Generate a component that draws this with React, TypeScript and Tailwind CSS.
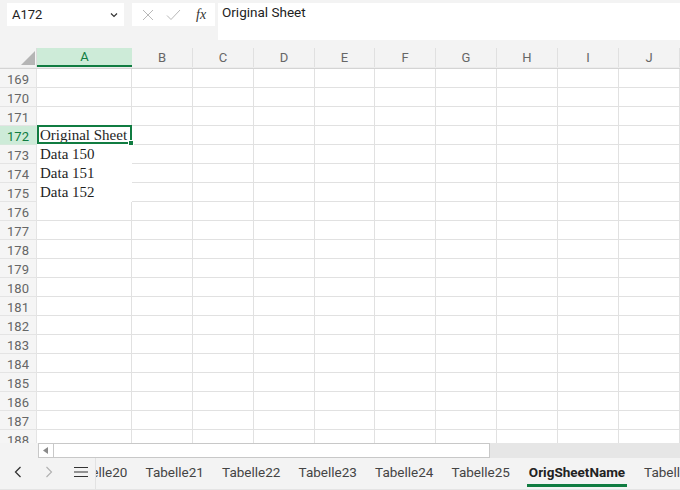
import React from 'react';

const cols = ['A', 'B', 'C', 'D', 'E', 'F', 'G', 'H', 'I', 'J'];
const colW = ['w-[95px]', 'w-[61px]', 'w-[61px]', 'w-[61px]', 'w-[60px]', 'w-[61px]', 'w-[61px]', 'w-[61px]', 'w-[61px]', 'w-[61px]'];
const rows = Array.from({ length: 20 }, (_, i) => 169 + i);
const data: Record<number, string> = {
    172: 'Original Sheet',
    173: 'Data 150',
    174: 'Data 151',
    175: 'Data 152',
};
const tabs = ['Tabelle20', 'Tabelle21', 'Tabelle22', 'Tabelle23', 'Tabelle24', 'Tabelle25', 'OrigSheetName', 'Tabelle26'];

const ui = { fontFamily: 'Roboto, "Open Sans", sans-serif' };

const Toolbar: React.FC = () => (
    <div className="h-[48px] flex items-start pt-[3px] shrink-0">
        <div className="ml-[7px] w-[117px] h-[23px] bg-white flex items-center justify-between pl-[5px] pr-[6px]">
            <span className="text-[13px] text-[#222]">A172</span>
            <svg width="8" height="6" viewBox="0 0 8 6">
                <path d="M1 1.5 L4 4.5 L7 1.5" fill="none" stroke="#333" strokeWidth="1.2" />
            </svg>
        </div>
        <div className="ml-[8px] w-[83px] h-[23px] bg-white flex items-center pl-[10px]">
            <svg width="12" height="12" viewBox="0 0 12 12">
                <path d="M1 1 L11 11 M11 1 L1 11" stroke="#b8b8b8" strokeWidth="1" />
            </svg>
            <svg className="ml-[12px]" width="15" height="12" viewBox="0 0 15 12">
                <path d="M1 6.5 L5 10.5 L14 1" fill="none" stroke="#b8b8b8" strokeWidth="1" />
            </svg>
            <span className="ml-[15px] text-[14px] italic text-[#333]" style={{ fontFamily: '"Liberation Serif", serif' }}>
                fx
            </span>
        </div>
        <div className="ml-[3px] flex-1 h-[37px] bg-white pl-[4px] leading-[18px]">
            <span className="text-[13.5px] text-[#222]">Original Sheet</span>
        </div>
    </div>
);

const HeaderRow: React.FC = () => (
    <div className="flex h-[19px] shrink-0">
        <div className="w-[37px] h-full border-r border-[#dcdcdc] flex items-end justify-end pr-[1px] pb-[2px]">
            <svg width="14" height="14" viewBox="0 0 14 14">
                <polygon points="14,0 14,14 0,14" fill="#b5b5b5" />
            </svg>
        </div>
        {cols.map((c, i) =>
            c === 'A' ? (
                <div
                    key={c}
                    className={`${colW[i]} shrink-0 h-full bg-[#cdebd8] border-b-2 border-[#107c41] flex items-center justify-center text-[13px] text-[#107c41]`}
                >
                    {c}
                </div>
            ) : (
                <div
                    key={c}
                    className={`${colW[i]} shrink-0 h-full border-r border-[#e0e0e0] flex items-center justify-center text-[13px] text-[#666]`}
                >
                    {c}
                </div>
            )
        )}
    </div>
);

const Row: React.FC<{ n: number }> = ({ n }) => {
    const active = n === 172;
    const filled = n >= 173 && n <= 175;
    return (
        <div className="flex h-[19px] shrink-0">
            <div
                className={`w-[37px] h-full border-r border-b flex items-center justify-center pt-[4px] text-[13px] ${
                    active ? 'bg-[#cdebd8] text-[#107c41] border-[#d6e8dc]' : 'bg-[#f5f5f5] text-[#666] border-[#e4e4e4]'
                }`}
            >
                {n}
            </div>
            {cols.map((c, i) => {
                if (c === 'A') {
                    return (
                        <div
                            key={c}
                            className={`${colW[i]} shrink-0 h-full bg-white relative flex items-center pl-[3px] pt-[1px] text-[15px] text-[#1f1f1f] whitespace-nowrap ${
                                filled || active ? 'border-r border-b border-white' : 'border-r border-b border-[#e1e1e1]'
                            }`}
                            style={{ fontFamily: '"Liberation Serif", serif' }}
                        >
                            {data[n]}
                            {active && (
                                <div className="absolute -top-px left-0 -right-px bottom-0 border-2 border-[#107c41]">
                                    <div className="absolute -right-[4px] -bottom-[4px] w-[6px] h-[6px] bg-[#107c41] border border-white" />
                                </div>
                            )}
                        </div>
                    );
                }
                return <div key={c} className={`${colW[i]} shrink-0 h-full bg-white border-r border-b border-[#e1e1e1]`} />;
            })}
        </div>
    );
};

const ScrollRow: React.FC = () => (
    <div className="flex h-[15px] shrink-0">
        <div className="w-[38px] h-full bg-[#f3f3f3]" />
        <div className="w-[16px] h-full bg-white border border-[#c8c8c8] flex items-center justify-center">
            <svg width="6" height="7" viewBox="0 0 6 7">
                <polygon points="5,0 5,7 0,3.5" fill="#8a8a8a" />
            </svg>
        </div>
        <div className="w-[436px] h-full bg-white border-y border-r border-[#c8c8c8]" />
        <div className="flex-1 h-full bg-[#e6e6e6]" />
    </div>
);

const TabBar: React.FC = () => (
    <div className="flex-1 flex border-b border-[#e4e4e4]">
        <div className="w-[96px] h-full flex items-center border-r border-[#e2e2e2] pb-[3px] shrink-0">
            <svg className="ml-[14px]" width="8" height="12" viewBox="0 0 8 12">
                <path d="M6.5 1 L1.5 6 L6.5 11" fill="none" stroke="#333" strokeWidth="1.3" />
            </svg>
            <svg className="ml-[23px]" width="8" height="12" viewBox="0 0 8 12">
                <path d="M1.5 1 L6.5 6 L1.5 11" fill="none" stroke="#b0b0b0" strokeWidth="1.1" />
            </svg>
            <svg className="ml-[21px]" width="14" height="12" viewBox="0 0 14 12">
                <path d="M0 1.5 H14 M0 6 H14 M0 10.5 H14" stroke="#333" strokeWidth="1.2" />
            </svg>
        </div>
        <div className="flex-1 overflow-hidden h-full">
            <div className="flex h-full ml-[-36px]">
                {tabs.map((t) => {
                    const on = t === 'OrigSheetName';
                    return (
                        <div
                            key={t}
                            className={`${on ? 'w-[116px]' : 'w-[76.5px]'} shrink-0 h-full relative flex items-center justify-center pb-[3px] whitespace-nowrap text-[13.5px] ${
                                on ? 'font-bold text-[#222]' : 'text-[#444]'
                            }`}
                        >
                            {t}
                            {on && <div className="absolute bottom-[2px] left-[8px] w-[100px] h-[3px] bg-[#107c41]" />}
                        </div>
                    );
                })}
            </div>
        </div>
    </div>
);

export default function App() {
    return (
        <div className="w-[680px] h-[490px] bg-[#f3f3f3] flex flex-col overflow-hidden" style={ui}>
            <Toolbar />
            <HeaderRow />
            <div className="h-[2px] shrink-0 border-t border-[#ececec] border-b border-b-[#d4d4d4] bg-[#f5f5f5]" />
            <div className="h-[374px] shrink-0 overflow-hidden flex flex-col bg-white">
                {rows.map((n) => (
                    <Row key={n} n={n} />
                ))}
            </div>
            <ScrollRow />
            <TabBar />
        </div>
    );
}
